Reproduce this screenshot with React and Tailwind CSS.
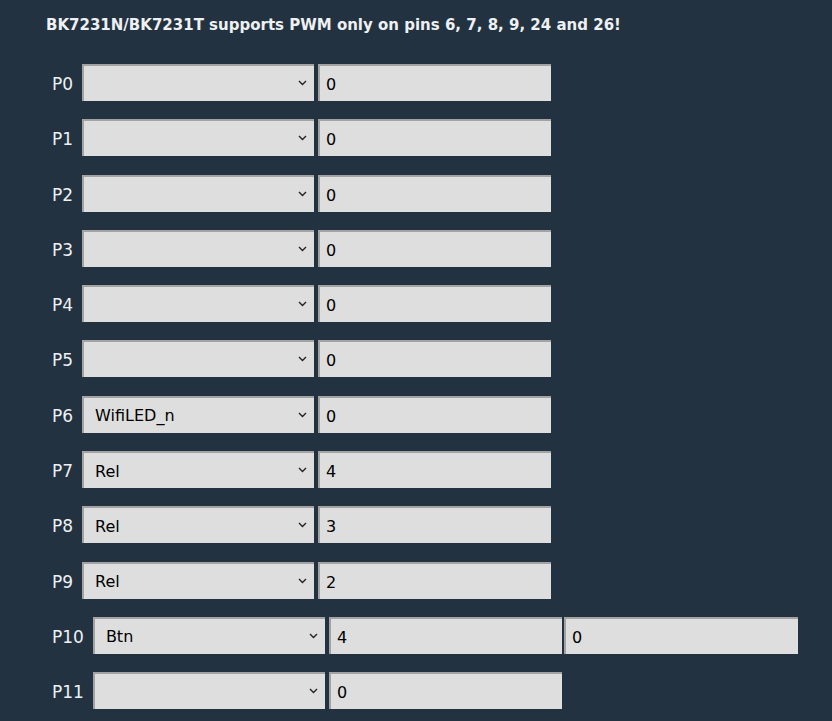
const rows = [
  { pin: 'P0', role: '', vals: ['0'] },
  { pin: 'P1', role: '', vals: ['0'] },
  { pin: 'P2', role: '', vals: ['0'] },
  { pin: 'P3', role: '', vals: ['0'] },
  { pin: 'P4', role: '', vals: ['0'] },
  { pin: 'P5', role: '', vals: ['0'] },
  { pin: 'P6', role: 'WifiLED_n', vals: ['0'] },
  { pin: 'P7', role: 'Rel', vals: ['4'] },
  { pin: 'P8', role: 'Rel', vals: ['3'] },
  { pin: 'P9', role: 'Rel', vals: ['2'] },
  { pin: 'P10', role: 'Btn', vals: ['4', '0'] },
  { pin: 'P11', role: '', vals: ['0'] },
];

const field = 'h-[37px] bg-[#dedede] border-t-2 border-l-2 border-t-[#a3a3a3] border-l-[#a3a3a3] text-[16px] text-black outline-none';

function RoleSelect({ value }) {
  return (
    <div className="relative w-[232px]">
      <select defaultValue={value}
        className={`${field} w-full appearance-none pl-[11px] pt-[2px] rounded-none`}>
        <option value=""></option>
        <option value="WifiLED_n">WifiLED_n</option>
        <option value="Rel">Rel</option>
        <option value="Btn">Btn</option>
      </select>
      {/* chevron */}
      <svg className="absolute right-[7px] top-[16px] pointer-events-none" width="9" height="6" viewBox="0 0 9 6">
        <path d="M1 1 L4.5 4.5 L8 1" fill="none" stroke="#222" strokeWidth="1.4" />
      </svg>
    </div>
  );
}

export default function App() {
  return (
    <div className="min-h-[721px] bg-[#223240] pl-[46px] pt-[15px]"
      style={{ fontFamily: '"DejaVu Sans", Verdana, sans-serif' }}>
      <p className="text-[15px] font-bold text-[#eef0f2] leading-[20px]">
        BK7231N/BK7231T supports PWM only on pins 6, 7, 8, 9, 24 and 26!
      </p>
      <div className="mt-[29px] pl-[6px] flex flex-col gap-[18.3px]">
        {rows.map(r => (
          <div key={r.pin} className="flex items-center h-[37px]">
            <span className="text-[17px] text-[#eef0f2] mr-[9px] leading-[37px] translate-y-[2px]">{r.pin}</span>
            <RoleSelect value={r.role} />
            <div className="flex gap-[2px] ml-[4px]">
              {r.vals.map((v, i) => (
                <input key={i} defaultValue={v}
                  className={`${field} ${i === 0 ? 'w-[233px]' : 'w-[234px]'} pl-[6px] pt-[2px] rounded-none`} />
              ))}
            </div>
          </div>
        ))}
      </div>
    </div>
  );
}
